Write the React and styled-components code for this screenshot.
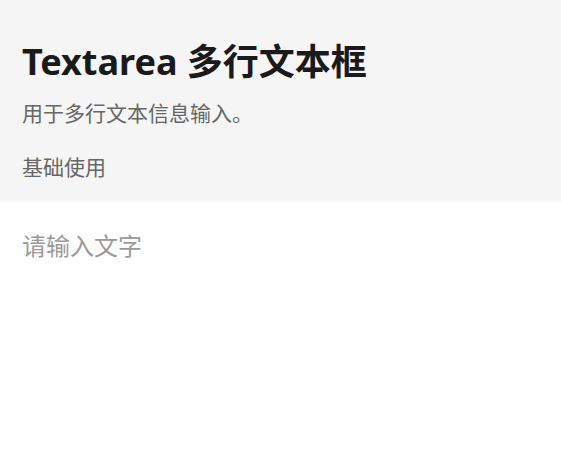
import React from "react";
import styled, { createGlobalStyle } from "styled-components";

const Global = createGlobalStyle`
  html, body { margin: 0; padding: 0; background: #ffffff; }
  body { font-family: "Noto Sans", "Noto Sans CJK SC", sans-serif; }
  * { box-sizing: border-box; }
`;

const Page = styled.div`
  display: flex;
  flex-direction: column;
  width: 100%;
`;

const Header = styled.header`
  display: flex;
  flex-direction: column;
  background: #f5f5f5;
  padding: 35px 22px 19px;
`;

const Title = styled.h1`
  margin: 0;
  font-size: 36px;
  line-height: 54px;
  font-weight: 700;
  color: #1a1a1a;
`;

const Desc = styled.p`
  margin: 9px 0 0;
  font-size: 21px;
  line-height: 31px;
  color: #666666;
`;

const Section = styled.h2`
  margin: 23px 0 0;
  font-size: 21px;
  line-height: 31px;
  font-weight: 400;
  color: #666666;
`;

const Field = styled.textarea`
  display: block;
  width: 100%;
  height: 273px;
  border: none;
  outline: none;
  resize: none;
  background: #ffffff;
  padding: 26px 22px;
  font-family: "Noto Sans", "Noto Sans CJK SC", sans-serif;
  font-size: 24px;
  line-height: 36px;
  color: #333333;
  &::placeholder { color: #9a9a9a; }
`;

export default function App() {
  return (
    <Page>
      <Global />
      <Header>
        <Title>Textarea 多行文本框</Title>
        <Desc>用于多行文本信息输入。</Desc>
        <Section>基础使用</Section>
      </Header>
      <Field placeholder="请输入文字" />
    </Page>
  );
}
